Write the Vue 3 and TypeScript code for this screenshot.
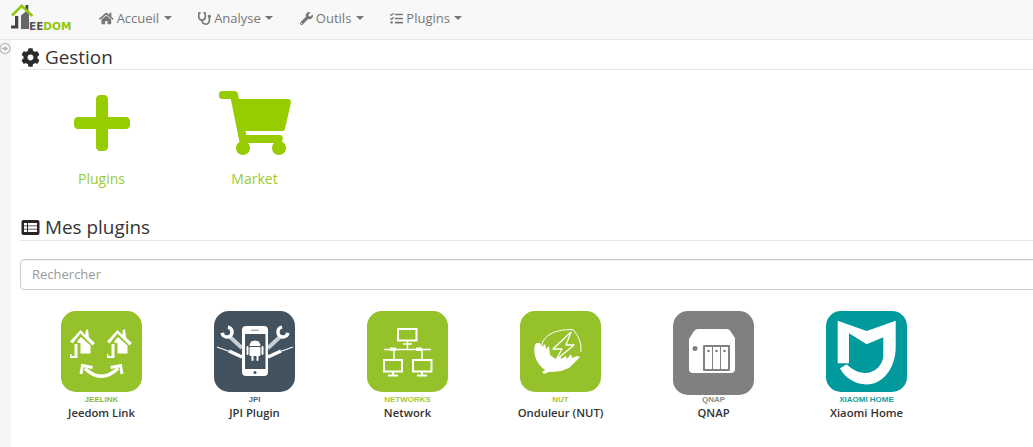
<script setup lang="ts">
const menu = [
  {
    label: 'Accueil',
    box: '0 0 576 512',
    d: 'M280.37 148.26L96 300.11V464a16 16 0 0 0 16 16l112.06-.29a16 16 0 0 0 15.92-16V368a16 16 0 0 1 16-16h64a16 16 0 0 1 16 16v95.64a16 16 0 0 0 16 16.05L464 480a16 16 0 0 0 16-16V300L295.67 148.26a12.19 12.19 0 0 0-15.3 0zM571.6 251.47L488 182.56V44.05a12 12 0 0 0-12-12h-56a12 12 0 0 0-12 12v72.61L318.47 43a48 48 0 0 0-61 0L4.34 251.47a12 12 0 0 0-1.6 16.9l25.5 31A12 12 0 0 0 45.15 301l235.22-193.74a12.19 12.19 0 0 1 15.3 0L530.9 301a12 12 0 0 0 16.9-1.6l25.5-31a12 12 0 0 0-1.7-16.93z',
  },
  {
    label: 'Analyse',
    box: '0 0 512 512',
    d: 'M447.1 112c-34.2.5-62.3 28.4-63 62.6-.5 24.3 12.5 45.6 32 56.8V344c0 57.3-50.2 104-112 104-60 0-109.2-44.1-111.9-99.2C265 333.8 320 269.2 320 192V36.6c0-11.4-8.1-21.3-19.3-23.5L237.8.5c-13-2.6-25.6 5.8-28.2 18.8L206.4 35c-2.6 13 5.8 25.6 18.8 28.2l30.7 6.1v121.4c0 52.9-42.2 96.7-95.1 97.2-53.4.5-96.9-42.7-96.9-96V69.4l30.7-6.1c13-2.6 21.4-15.2 18.8-28.2l-3.1-15.7C107.7 6.4 95.1-2 82.1.6L19.3 13C8.1 15.3 0 25.1 0 36.6V192c0 77.3 55.1 142 128.1 156.8C130.7 439.2 208.6 512 304 512c97 0 176-75.4 176-168V231.4c19.1-11.1 32-31.7 32-55.4 0-35.7-29.2-64.5-64.9-64z',
  },
  {
    label: 'Outils',
    box: '0 0 512 512',
    d: 'M507.73 109.1c-2.24-9.03-13.54-12.09-20.12-5.51l-74.36 74.36-67.88-11.31-11.31-67.88 74.36-74.36c6.62-6.62 3.43-17.9-5.66-20.16-47.38-11.74-99.55.91-136.58 37.93-39.64 39.64-50.55 97.1-34.05 147.2L18.74 402.76c-24.99 24.99-24.99 65.51 0 90.5 24.99 24.99 65.51 24.99 90.5 0l213.21-213.21c50.12 16.71 107.47 5.68 147.37-34.22 37.07-37.07 49.7-89.32 37.91-136.73zM64 472c-13.25 0-24-10.75-24-24 0-13.26 10.75-24 24-24s24 10.74 24 24c0 13.25-10.75 24-24 24z',
  },
  {
    label: 'Plugins',
    box: '0 0 512 512',
    d: 'M139.61 35.5a12 12 0 0 0-17 0L58.93 98.81l-22.7-22.12a12 12 0 0 0-17 0L3.53 92.41a12 12 0 0 0 0 17l47.59 47.4a12.78 12.78 0 0 0 17.61 0l15.59-15.62L156.52 69a12.09 12.09 0 0 0 .09-17zm0 159.19a12 12 0 0 0-17 0l-63.68 63.72-22.7-22.1a12 12 0 0 0-17 0L3.53 252a12 12 0 0 0 0 17L51 316.5a12.77 12.77 0 0 0 17.6 0l15.7-15.69 72.2-72.22a12 12 0 0 0 .09-16.9zM64 368c-26.49 0-48.59 21.5-48.59 48S37.53 464 64 464a48 48 0 0 0 0-96zm432 16H208a16 16 0 0 0-16 16v32a16 16 0 0 0 16 16h288a16 16 0 0 0 16-16v-32a16 16 0 0 0-16-16zm0-320H208a16 16 0 0 0-16 16v32a16 16 0 0 0 16 16h288a16 16 0 0 0 16-16V80a16 16 0 0 0-16-16zm0 160H208a16 16 0 0 0-16 16v32a16 16 0 0 0 16 16h288a16 16 0 0 0 16-16v-32a16 16 0 0 0-16-16z',
  },
]

const plugins = [
  { id: 'jeelink', name: 'Jeedom Link', tag: 'JEELINK', bg: '#95c12b', tagColor: '#8fb73a', h: 81 },
  { id: 'jpi', name: 'JPI Plugin', tag: 'JPI', bg: '#42525f', tagColor: '#55626c', h: 81 },
  { id: 'network', name: 'Network', tag: 'NETWORKS', bg: '#95c12b', tagColor: '#a2cb3c', h: 81 },
  { id: 'nut', name: 'Onduleur (NUT)', tag: 'NUT', bg: '#95c12b', tagColor: '#a2cb3c', h: 81 },
  { id: 'qnap', name: 'QNAP', tag: 'QNAP', bg: '#808080', tagColor: '#8c8c8c', h: 84 },
  { id: 'xiaomi', name: 'Xiaomi Home', tag: 'XIAOMI HOME', bg: '#00999c', tagColor: '#16a0a3', h: 81 },
]
</script>

<template>
  <div class="page">
    <header class="navbar">
      <svg class="logo" width="64" height="30" viewBox="0 0 64 30">
        <path d="M11 12.500l6-5 2 2V26h-8z" fill="#666" />
        <path d="M5 13h3.300v12.500H1v-3h4z" fill="#444" />
        <path d="M15.500 2h2.800v8l-2.800-2.800z" fill="#444" />
        <path d="M1 11.500L11.700 1l11.600 11-1.800 2-9.800-9.200-8.800 8.700z" fill="#93c60f" />
        <text class="logo-text" x="19" y="27"><tspan fill="#555">EE</tspan><tspan fill="#93c60f">DOM</tspan></text>
      </svg>
      <nav class="menu">
        <a v-for="m in menu" :key="m.label" class="menu-item">
          <svg class="menu-icon" height="13" :viewBox="m.box"><path :d="m.d" /></svg>
          <span>{{ m.label }}</span>
          <i class="caret"></i>
        </a>
      </nav>
    </header>

    <div class="body">
      <aside class="side">
        <svg width="13" height="13" viewBox="0 0 13 13">
          <circle cx="5" cy="6.500" r="5" fill="#fff" stroke="#bfbfbf" stroke-width="1.500" />
          <path d="M1.800 5.500h3V3.500l3.300 3-3.300 3V7.500h-3z" fill="#b5b5b5" />
        </svg>
      </aside>

      <main class="main">
        <h3 class="legend">
          <svg width="19" height="19" viewBox="0 0 512 512">
            <path fill="#2b2b2b" d="M487.400 315.700l-42.600-24.600c4.300-23.200 4.300-47 0-70.200l42.600-24.600c4.900-2.800 7.100-8.600 5.500-14-11.100-35.600-30-67.800-54.700-94.600-3.800-4.100-10-5.100-14.800-2.300L380.800 110c-17.900-15.400-38.500-27.300-60.800-35.100V25.800c0-5.600-3.900-10.500-9.400-11.700-36.700-8.200-74.300-7.800-109.200 0-5.500 1.200-9.400 6.100-9.400 11.700V75c-22.200 7.900-42.800 19.800-60.800 35.100L88.700 85.500c-4.900-2.800-11-1.900-14.800 2.300-24.700 26.700-43.600 58.900-54.700 94.600-1.700 5.400.6 11.200 5.500 14L67.300 221c-4.300 23.200-4.300 47 0 70.200l-42.600 24.600c-4.900 2.800-7.100 8.600-5.500 14 11.100 35.600 30 67.800 54.700 94.600 3.800 4.100 10 5.100 14.800 2.300l42.600-24.600c17.900 15.400 38.500 27.300 60.800 35.100v49.200c0 5.600 3.900 10.500 9.400 11.700 36.700 8.200 74.300 7.800 109.200 0 5.500-1.200 9.400-6.100 9.400-11.700v-49.200c22.200-7.900 42.800-19.800 60.800-35.100l42.600 24.600c4.900 2.800 11 1.900 14.800-2.300 24.700-26.700 43.600-58.900 54.700-94.600 1.500-5.500-.7-11.300-5.600-14.100zM256 336c-44.100 0-80-35.900-80-80s35.900-80 80-80 80 35.900 80 80-35.900 80-80 80z" />
          </svg>
          Gestion
        </h3>

        <div class="actions">
          <div class="action">
            <div class="action-icon">
              <svg width="56" height="64" viewBox="0 0 448 512">
                <path d="M416 208H272V64c0-17.670-14.330-32-32-32h-32c-17.670 0-32 14.330-32 32v144H32c-17.670 0-32 14.330-32 32v32c0 17.670 14.330 32 32 32h144v144c0 17.670 14.330 32 32 32h32c17.670 0 32-14.330 32-32V304h144c17.670 0 32-14.330 32-32v-32c0-17.670-14.330-32-32-32z" />
              </svg>
            </div>
            <span>Plugins</span>
          </div>
          <div class="action">
            <div class="action-icon">
              <svg width="72" height="64" viewBox="0 0 576 512">
                <path d="M528.120 301.319l47.273-208C578.806 78.301 567.391 64 551.990 64H159.208l-9.166-44.810C147.758 8.021 137.930 0 126.529 0H24C10.745 0 0 10.745 0 24v16c0 13.255 10.745 24 24 24h69.883l70.248 343.435C147.325 417.100 136 435.222 136 456c0 30.928 25.072 56 56 56s56-25.072 56-56c0-15.674-6.447-29.835-16.824-40h209.647C430.447 426.165 424 440.326 424 456c0 30.928 25.072 56 56 56s56-25.072 56-56c0-22.172-12.888-41.332-31.579-50.405l5.517-24.276c3.413-15.018-8.002-29.319-23.403-29.319H218.117l-6.545-32h293.145c11.206 0 20.920-7.754 23.403-18.681z" />
              </svg>
            </div>
            <span>Market</span>
          </div>
        </div>

        <h3 class="legend second">
          <svg width="19" height="19" viewBox="0 0 19 19">
            <rect x="0.500" y="2" width="18" height="15" rx="2" fill="#2b2420" />
            <path d="M3 5h3v2.500H3zM7 5h9v2.500H7zM3 8.300h3v2.500H3zM7 8.300h9v2.500H7zM3 11.600h3v2.500H3zM7 11.600h9v2.500H7z" fill="#fff" />
          </svg>
          Mes plugins
        </h3>

        <div class="search">Rechercher</div>

        <div class="plugins">
          <div v-for="p in plugins" :key="p.id" class="plugin">
            <svg class="plugin-icon" width="81" height="84" viewBox="0 0 81 84">
              <rect width="81" :height="p.h" rx="15" :fill="p.bg" />

              <g v-if="p.id === 'jeelink'">
                <g v-for="dx in [0, 37]" :key="dx" :transform="`translate(${dx} 0)`">
                  <path d="M9 30.500L19.500 19l5 5v-4.500l2.500-1.500 1 8.500 6 5.500-2.500 2.500-12-12-8 10z" fill="#fff" />
                  <path d="M16.500 30l3.500-4 9.500 8.500V42.500H19.500V32h-3z" fill="#fff" />
                  <path d="M13.500 33h3v14h-7.500v-4h1.500v2h3z" fill="#fff" />
                </g>
                <path d="M24 57.500Q40 73 57 57.500" fill="none" stroke="#fff" stroke-width="3.500" />
                <path d="M20 63l1.500-8.500 10 2M61 63l-1.500-8.500-10 2" fill="none" stroke="#fff" stroke-width="3" />
              </g>

              <g v-else-if="p.id === 'jpi'">
                <path d="M15 25l13 12M67 25L54 37" stroke="#c9ced2" stroke-width="4" />
                <path d="M8.100 21.900A5 5 0 1 0 13.900 16.100M73.900 21.900A5 5 0 1 1 68.100 16.100" fill="none" stroke="#fff" stroke-width="3.500" />
                <path d="M3 36l14 5M79 36l-14 5" stroke="#fff" stroke-width="1.200" />
                <path d="M15 40l13 6M67 40l-13 6" stroke="#fff" stroke-width="3.500" />
                <rect x="28" y="15" width="26" height="50" rx="4" fill="#fff" />
                <rect x="31" y="23" width="20.500" height="35" fill="#42525f" />
                <rect x="37" y="18.500" width="8" height="1.500" rx="0.700" fill="#a9b1b7" />
                <circle cx="41" cy="61.500" r="1.500" fill="#42525f" />
                <path d="M35.500 35a5.500 5.500 0 0 1 11 0z" fill="#fff" />
                <path d="M37 30l1.500 2M45 30l-1.500 2" stroke="#fff" stroke-width="0.700" />
                <rect x="35.500" y="36" width="11" height="9" rx="1" fill="#fff" />
                <path d="M33.500 36v7M48.500 36v7M38.500 45v4M43.500 45v4" stroke="#fff" stroke-width="2" stroke-linecap="round" />
              </g>

              <g v-else-if="p.id === 'network'" fill="none" stroke="#fff" stroke-width="2">
                <rect x="31" y="18" width="18.500" height="11.500" />
                <path d="M40.500 30v8M36 33h9M17 38.500h47M27 38.500v10M55 38.500v10" stroke-width="1.500" />
                <rect x="17" y="49" width="18" height="11.500" />
                <rect x="46" y="49" width="18.500" height="11.500" />
                <path d="M26 61v3M21 64.500h10M55 61v3M50 64.500h10" />
                <path d="M23 36.500h6v3.500h-6zM49 36.500h6v3.500h-6z" fill="#fff" stroke="none" />
              </g>

              <g v-else-if="p.id === 'nut'">
                <path d="M53 18.500Q30 18 23 30q-2 4-.5 9M53 18.500Q62 28 61 41" fill="none" stroke="#fff" stroke-width="1" />
                <path d="M20 32l2 4 3-3 1 5 3-3 1 9 7 5 3-5 1 4 5-3 1 3 4-5 1 4 5-2 3 1-5 5-6 6-8 3q-7 1-12 1l-5 2-2-2 3-2q-8-6-10-14t1-13z" fill="#fff" />
                <path d="M51 21L33 38h9l-6 11 18-15h-8l5-13z" fill="#95c12b" stroke="#fff" stroke-width="1.300" stroke-linejoin="round" />
              </g>

              <g v-else-if="p.id === 'qnap'">
                <path d="M26 18h28a4 4 0 0 1 3 1.500l5 7.500v31a4 4 0 0 1-4 4H20a4 4 0 0 1-4-4V28l5-8a6 6 0 0 1 5-2z" fill="#fff" />
                <rect x="30" y="34" width="27" height="26" rx="1" fill="#808080" />
                <rect x="32" y="36" width="7" height="22" fill="#fff" />
                <rect x="40" y="36" width="7" height="22" fill="#fff" />
                <rect x="48" y="36" width="7" height="22" fill="#fff" />
                <circle cx="35.500" cy="40" r="1.300" fill="#808080" />
                <circle cx="43.500" cy="40" r="1.300" fill="#808080" />
                <circle cx="51.500" cy="40" r="1.300" fill="#808080" />
                <circle cx="22" cy="37.500" r="2.500" fill="#808080" />
              </g>

              <path
                v-else
                d="M11.700 9.700L40.700 20 69.700 9.700V35.700C69.700 58 56 73.500 40.700 73.500 28 73.500 18.500 66 14 57.300L20.700 53.300C25 58 32 62 39 62 49 62 57.300 54 57.300 44V26.300L40.700 33.300 23 22.300V52.300H11.700z"
                fill="#fff"
              />
            </svg>
            <span class="tag" :style="{ color: p.tagColor }">{{ p.tag }}</span>
            <span class="name">{{ p.name }}</span>
          </div>
        </div>
      </main>
    </div>
  </div>
</template>

<style>
html,
body {
  margin: 0;
  height: 100%;
  overflow: hidden;
  background: #fff;
}
</style>

<style scoped>
.page {
  width: 1033px;
  height: 447px;
  overflow: hidden;
  font-family: 'Open Sans', sans-serif;
  display: flex;
  flex-direction: column;
}
.navbar {
  height: 39px;
  box-sizing: content-box;
  flex: none;
  display: flex;
  align-items: center;
  background: #f8f8f8;
  border-bottom: 1px solid #e7e7e7;
}
.logo {
  align-self: flex-start;
  margin: 3px 0 0 10px;
  flex: none;
}
.logo-text {
  font-family: 'DejaVu Sans', sans-serif;
  font-weight: 700;
  font-size: 10.500px;
}
.menu {
  display: flex;
  gap: 26.500px;
  margin-left: 25px;
  margin-bottom: 3px;
  color: #777;
  font-size: 13px;
}
.menu-item {
  display: flex;
  align-items: center;
}
.menu-icon {
  fill: #777;
  margin-right: 3px;
}
.caret {
  width: 0;
  height: 0;
  margin-left: 4.500px;
  border-top: 4px solid #777;
  border-left: 4px solid transparent;
  border-right: 4px solid transparent;
}
.body {
  flex: 1;
  display: flex;
  min-height: 0;
}
.side {
  width: 11px;
  flex: none;
  background: #f6f6f6;
  padding-top: 2px;
  line-height: 0;
}
.main {
  flex: 1;
  padding-left: 9px;
  min-width: 0;
  overflow: hidden;
}
.legend {
  margin: 0;
  height: 30px;
  box-sizing: border-box;
  display: flex;
  align-items: center;
  gap: 5px;
  padding-left: 1px;
  padding-top: 5px;
  font-size: 18.900px;
  font-weight: 400;
  color: #333;
  border-bottom: 1px solid #e5e5e5;
  white-space: nowrap;
}
.second {
  margin-top: 23px;
  padding-top: 3px;
}
.actions {
  display: flex;
  margin-left: 5px;
  margin-top: 21px;
}
.action {
  width: 153px;
  display: flex;
  flex-direction: column;
  align-items: center;
  font-size: 14px;
  line-height: 19px;
  color: #9c3;
}
.action-icon {
  height: 64px;
  margin-bottom: 14px;
  line-height: 0;
}
.action-icon svg {
  fill: #96cc00;
}
.search {
  margin-top: 18px;
  width: 1100px;
  height: 31px;
  box-sizing: border-box;
  border: 1px solid #ccc;
  border-radius: 4px;
  padding-left: 11px;
  font-size: 13px;
  line-height: 29px;
  color: #999;
  box-shadow: inset 0 1px 1px rgba(0, 0, 0, 0.075);
}
.plugins {
  display: flex;
  margin-left: 5px;
  margin-top: 21px;
}
.plugin {
  width: 153px;
  display: flex;
  flex-direction: column;
  align-items: center;
}
.plugin-icon {
  display: block;
  margin-bottom: -3px;
}
.tag {
  margin-top: 3px;
  font-family: 'Liberation Sans', sans-serif;
  font-weight: 700;
  font-size: 8px;
  line-height: 10px;
  white-space: nowrap;
}
.name {
  font-size: 11.300px;
  font-weight: 600;
  line-height: 15px;
  color: #333;
  white-space: nowrap;
}
</style>
